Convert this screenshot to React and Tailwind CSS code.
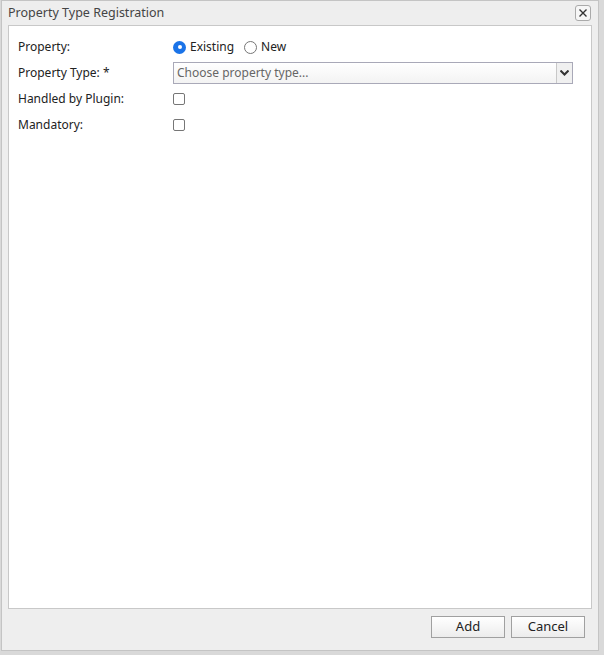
import { useState } from 'react';

const Row = ({ label, children }) => (
  <div className="flex items-center h-[26px]">
    <div className="w-[155px] shrink-0">{label}</div>
    <div className="flex-1 flex items-center">{children}</div>
  </div>
);

const Radio = ({ checked, label, onClick }) => (
  <button onClick={onClick} className="flex items-center gap-[4px] mr-[10px]">
    {checked ? (
      <span className="w-[13px] h-[13px] rounded-full bg-[#1a73e8] flex items-center justify-center">
        <span className="w-[4px] h-[4px] rounded-full bg-white" />
      </span>
    ) : (
      <span className="w-[13px] h-[13px] rounded-full border border-[#767676] bg-white" />
    )}
    <span>{label}</span>
  </button>
);

const Checkbox = () => (
  <span className="w-[12px] h-[12px] rounded-[2px] border border-[#767676] bg-white" />
);

export default function App() {
  const [mode, setMode] = useState('existing');

  return (
    <div className="w-[604px] h-[655px] bg-[#d9d9d9] flex font-['Noto_Sans',sans-serif] text-[12px] text-[#222]">
      <div className="ml-[1px] w-[598px] h-[651px] bg-[#eeeeee] border border-[#c4c4c4] flex flex-col">
        <div className="h-[24px] flex items-center justify-between pl-[6px] pr-[7px]">
          <span className="text-[12.5px] text-[#444]">Property Type Registration</span>
          <button className="w-[16px] h-[16px] border border-[#aaa] rounded-[3px] bg-[#f6f6f6] flex items-center justify-center">
            <svg width="10" height="10" viewBox="0 0 10 10">
              <path d="M1.5 1.5 L8.5 8.5 M8.5 1.5 L1.5 8.5" stroke="#333" strokeWidth="1.4" />
            </svg>
          </button>
        </div>
        <div className="mx-[6px] h-[584px] bg-white border border-[#c8c8c8] pl-[9px] pr-[18px] pt-[8px]">
          <Row label="Property:">
            <Radio checked={mode === 'existing'} label="Existing" onClick={() => setMode('existing')} />
            <Radio checked={mode === 'new'} label="New" onClick={() => setMode('new')} />
          </Row>
          <Row label="Property Type: *">
            <div className="flex-1 h-[22px] border border-[#a9a9b8] flex">
              <div className="flex-1 flex items-center pl-[3px] text-[#666] bg-gradient-to-b from-white to-[#f3f3f3]">
                Choose property type...
              </div>
              <div className="w-[16px] border-l border-[#c8c8c8] bg-[#f0f0f0] flex items-center justify-center">
                <svg width="9" height="6" viewBox="0 0 9 6">
                  <path d="M0.5 0.5 L4.5 4.5 L8.5 0.5" stroke="#333" strokeWidth="2" fill="none" />
                </svg>
              </div>
            </div>
          </Row>
          <Row label="Handled by Plugin:">
            <Checkbox />
          </Row>
          <Row label="Mandatory:">
            <Checkbox />
          </Row>
        </div>
        <div className="flex-1 flex items-start justify-end gap-[6px] pr-[13px] pt-[7px]">
          <button className="w-[74px] h-[22px] border border-[#a0a0a0] bg-gradient-to-b from-white to-[#ececec] text-[13px]">
            Add
          </button>
          <button className="w-[74px] h-[22px] border border-[#a0a0a0] bg-gradient-to-b from-white to-[#ececec] text-[13px]">
            Cancel
          </button>
        </div>
      </div>
    </div>
  );
}
